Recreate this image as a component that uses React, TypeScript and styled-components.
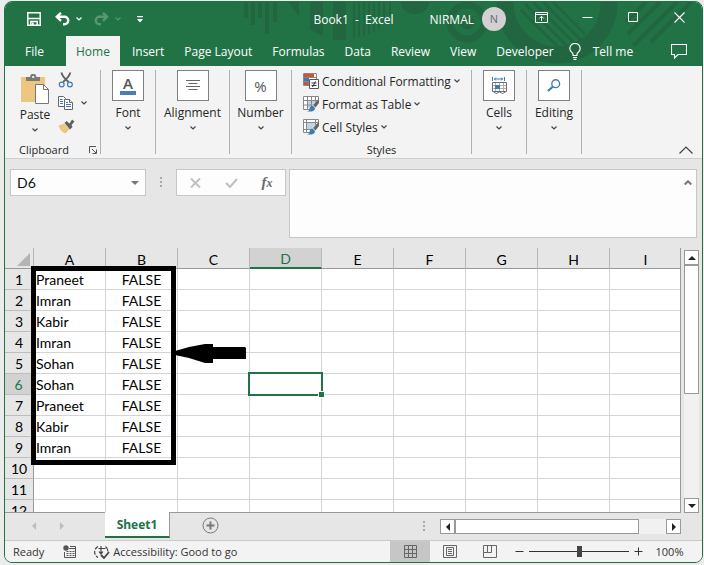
import React from 'react';
import styled, { createGlobalStyle, css } from 'styled-components';

const GREEN = '#217346';
const INK = '#262626';
const LINE = '#d4d4d4';
const UI_FONT = "'Open Sans', 'Noto Sans', sans-serif";
const CELL_FONT = "Lato, 'Open Sans', sans-serif";

const Global = createGlobalStyle`
  *, *::before, *::after { box-sizing: border-box; }
  body { margin: 0; background: #ececec; font-family: ${UI_FONT}; font-size: 12px; color: ${INK}; }
  button, input { font: inherit; color: inherit; }
  svg { display: block; flex: none; }
`;

const resetButton = css`
  padding: 0;
  border: 0;
  background: none;
  display: flex;
  align-items: center;
  justify-content: center;
`;

const Window = styled.div`
  margin: 0 1px 0 4px;
  border: 1px solid ${GREEN};
  border-radius: 8px;
  overflow: hidden;
  display: flex;
  flex-direction: column;
  flex: 1;
  min-height: 0;
  background: #e6e6e6;
`;

const Desktop = styled.div`
  height: 100vh;
  min-height: 400px;
  padding: 1px 0 2px;
  display: flex;
  flex-direction: column;
`;

/* ---------- Title bar and ribbon tabs ---------- */

const Banner = styled.header`
  position: relative;
  background: ${GREEN};
  color: #fff;
`;

const Decoration = styled.svg`
  position: absolute;
  top: 0;
  right: 0;
`;

const TitleBar = styled.div`
  position: relative;
  display: flex;
  align-items: center;
  height: 34px;
  padding-left: 22px;
`;

const QuickAccess = styled.div`
  display: flex;
  align-items: center;
`;

const QuickButton = styled.button<{ $after: number; $faded?: boolean }>`
  ${resetButton}
  margin-right: ${(p) => p.$after}px;
  opacity: ${(p) => (p.$faded ? 0.25 : 1)};
`;

const DocTitle = styled.h1`
  flex: 1;
  margin: 0 36px 0 0;
  font-size: 12px;
  font-weight: 400;
  text-align: right;
  white-space: pre;
`;

const UserName = styled.span`
  margin-right: 8px;
`;

const Avatar = styled.span`
  width: 24px;
  height: 24px;
  margin-right: 12px;
  border-radius: 50%;
  background: #d2d0d0;
  color: #6d6580;
  font-size: 11px;
  line-height: 24px;
  text-align: center;
`;

const WindowButton = styled.button`
  ${resetButton}
  width: 46px;
  height: 30px;
  align-self: flex-start;
`;

const TabRow = styled.nav`
  position: relative;
  display: flex;
  align-items: stretch;
  height: 30px;
  padding-left: 10px;
  padding-right: 15px;
`;

const Tab = styled.button<{ $active?: boolean; $gap?: number }>`
  ${resetButton}
  padding: 0 10px;
  margin-right: ${(p) => p.$gap ?? 0}px;
  background: ${(p) => (p.$active ? '#f3f3f3' : 'transparent')};
  color: ${(p) => (p.$active ? GREEN : '#fff')};
  white-space: nowrap;
`;

const TellMe = styled.button`
  ${resetButton}
  gap: 12px;
  margin-left: 5px;
`;

const CommentButton = styled.button`
  ${resetButton}
  margin-left: auto;
`;

/* ---------- Ribbon ---------- */

const Ribbon = styled.section`
  display: flex;
  align-items: flex-start;
  height: 93px;
  padding-top: 4px;
  background: #f3f3f3;
  border-bottom: 1px solid #cfcfcf;
`;

const Separator = styled.div`
  width: 1px;
  height: 84px;
  background: #b1b1b1;
`;

const Group = styled.div<{ $width: number }>`
  width: ${(p) => p.$width}px;
  height: 86px;
  display: flex;
  flex-direction: column;
`;

const GroupBody = styled.div`
  flex: 1;
  display: flex;
`;

const Caption = styled.div`
  display: flex;
  justify-content: center;
  align-items: center;
  height: 12px;
  font-size: 11px;
  line-height: 12px;
`;

const ClipboardCaption = styled(Caption)`
  justify-content: space-between;
  padding: 0 3px 0 14px;
`;

const PlainButton = styled.button`
  ${resetButton}
`;

const PasteButton = styled.button`
  ${resetButton}
  flex-direction: column;
  justify-content: flex-start;
  width: 44px;
  margin-left: 8px;
  padding-top: 4px;
`;

const ButtonLabel = styled.span`
  line-height: 16px;
  margin: 4px 0 5px;
  white-space: nowrap;
`;

const PasteLabel = styled(ButtonLabel)`
  margin: 3px 0 5px;
`;

const ClipTools = styled.div`
  display: flex;
  flex-direction: column;
  gap: 7px;
  padding: 2px 0 0 1px;
`;

const ClipTool = styled.button`
  ${resetButton}
  gap: 7px;
  justify-content: flex-start;
  height: 16px;
`;

const BigButton = styled.button`
  ${resetButton}
  flex: 1;
  flex-direction: column;
  justify-content: flex-start;
`;

const IconFrame = styled.span`
  width: 32px;
  height: 31px;
  border: 1px solid #808080;
  background: #fff;
  display: flex;
  flex-direction: column;
  align-items: center;
  justify-content: center;
  color: #555;
`;

const LetterA = styled.span`
  font-size: 15px;
  line-height: 15px;
  font-weight: 600;
  border-bottom: 4px solid #4a7ebb;
  width: 16px;
  height: 19px;
  text-align: center;
`;

const Percent = styled.span`
  font-size: 15px;
  line-height: 18px;
`;

const StyleList = styled.div`
  display: flex;
  flex-direction: column;
  padding: 0 0 0 11px;
  align-items: flex-start;
`;

const StyleButton = styled.button`
  ${resetButton}
  height: 22px;
  margin-bottom: 1px;
  gap: 3px;
  white-space: nowrap;
`;

const CollapseButton = styled.button`
  ${resetButton}
  margin: 76px 9px 0 auto;
`;

/* ---------- Formula bar ---------- */

const FormulaBar = styled.section`
  display: flex;
  align-items: flex-start;
  padding: 10px 5px;
`;

const Box = styled.div`
  display: flex;
  height: 27px;
  border: 1px solid #c6c6c6;
  background: #fdfdfd;
`;

const NameBox = styled(Box)`
  width: 136px;
  padding-right: 6px;
`;

const NameInput = styled.input`
  flex: 1;
  min-width: 0;
  border: 0;
  outline: 0;
  padding: 0 0 0 6px;
  background: none;
  font-family: ${CELL_FONT};
  font-size: 14px;
  color: #111;
`;

const Grip = styled.div<{ $width: number }>`
  width: ${(p) => p.$width}px;
  display: flex;
  flex-direction: column;
  align-items: center;
  gap: 2px;
  & > i { width: 2px; height: 2px; background: #a8a8a8; }
`;

const BarGrip = styled(Grip)`
  padding-top: 8px;
`;

const FxBox = styled(Box)`
  width: 110px;
`;

const FxButton = styled.button`
  ${resetButton}
  flex: 1;
`;

const FxMark = styled.span`
  font: italic 700 15px 'Liberation Serif', serif;
  color: #6a6a6a;
  & > small { font-size: 12px; }
`;

const FormulaBox = styled.div`
  flex: 1;
  height: 69px;
  margin-left: 3px;
  display: flex;
  align-items: flex-start;
  border: 1px solid #c6c6c6;
  background: #fdfdfd;
`;

const FormulaInput = styled.textarea`
  flex: 1;
  align-self: stretch;
  border: 0;
  outline: 0;
  resize: none;
  background: none;
  font: 14px ${CELL_FONT};
`;

const ExpandButton = styled.button`
  ${resetButton}
  margin: 10px 4px 0 0;
`;

/* ---------- Sheet ---------- */

const SheetArea = styled.main`
  flex: 1;
  min-height: 0;
  display: flex;
`;

const Pane = styled.div`
  position: relative;
  flex: 1;
  min-width: 0;
  overflow: hidden;
  border-right: 1px solid #999;
  border-bottom: 1px solid #999;
  background: #fff;
`;

const Grid = styled.table`
  width: calc(100% + 2px);
  table-layout: fixed;
  border-spacing: 0;
  font-family: ${CELL_FONT};
  font-size: 14px;
  line-height: 20px;
  color: #000;
`;

const Corner = styled.th`
  width: 29px;
  height: 21px;
  padding: 0;
  background: #e6e6e6;
  border-right: 1px solid #b8b8b8;
  border-bottom: 1px solid #999;
  & > svg { margin: 3px 0 0 12px; }
`;

const ColHead = styled.th<{ $on: boolean }>`
  height: 21px;
  padding: ${(p) => (p.$on ? '3px 0 0' : '2px 0 0')};
  line-height: ${(p) => (p.$on ? 16 : 17)}px;
  font-weight: 400;
  background: ${(p) => (p.$on ? '#d2d2d2' : '#e6e6e6')};
  color: ${(p) => (p.$on ? GREEN : '#000')};
  border-right: 1px solid #b8b8b8;
  border-bottom: ${(p) => (p.$on ? `2px solid ${GREEN}` : '1px solid #999')};
`;

const RowHead = styled.th<{ $on: boolean }>`
  height: 21px;
  padding: 1px 0 0;
  line-height: 19px;
  font-weight: 400;
  background: ${(p) => (p.$on ? '#d2d2d2' : '#e6e6e6')};
  color: ${(p) => (p.$on ? GREEN : '#000')};
  border-right: ${(p) => (p.$on ? `2px solid ${GREEN}` : '1px solid #999')};
  border-bottom: 1px solid #bdbdbd;
`;

const Cell = styled.td<{ $center?: boolean }>`
  position: relative;
  height: 21px;
  padding: ${(p) => (p.$center ? '1px 0 0' : '1px 0 0 2px')};
  line-height: 19px;
  text-align: ${(p) => (p.$center ? 'center' : 'left')};
  border-right: 1px solid ${LINE};
  border-bottom: 1px solid ${LINE};
`;

const Selection = styled.div`
  position: absolute;
  inset: -2px;
  z-index: 1;
  border: 2px solid ${GREEN};
  &::after {
    content: '';
    position: absolute;
    right: -4px;
    bottom: -4px;
    width: 7px;
    height: 7px;
    border: 1px solid #fff;
    background: ${GREEN};
  }
`;

const Highlight = styled.div`
  position: absolute;
  top: 18px;
  left: 26px;
  width: calc((100% - 27px) * 2 / 9 + 1px);
  height: 199px;
  border: 5px solid #000;
`;

const PointerArrow = styled.svg`
  position: absolute;
  top: 96px;
  left: calc((100% - 27px) * 2 / 9 + 26px);
`;

const VScroll = styled.div`
  width: 15px;
  margin: 2px 3px 0;
  display: flex;
  flex-direction: column;
  background: #f1f1f1;
`;

const ScrollButton = styled.button`
  ${resetButton}
  width: 15px;
  height: 15px;
  border: 1px solid #999;
  background: #fff;
`;

const VThumb = styled.div`
  height: 129px;
  margin-bottom: auto;
  border: 1px solid #999;
  background: #fff;
`;

/* ---------- Sheet tabs ---------- */

const SheetBar = styled.div`
  display: flex;
  align-items: flex-start;
  height: 27px;
  padding-right: 21px;
`;

const SheetNav = styled.div`
  width: 100px;
  height: 25px;
  display: flex;
  align-items: center;
  padding-left: 25px;
  gap: 20px;
`;

const SheetTab = styled.button`
  ${resetButton}
  position: relative;
  width: 65px;
  height: 26px;
  margin-top: -1px;
  background: #fff;
  border-right: 1px solid #999;
  border-bottom: 2px solid ${GREEN};
  color: ${GREEN};
  font-weight: 700;
`;

const AddSheet = styled.button`
  ${resetButton}
  margin: 4px 0 0 32px;
`;

const SheetGrip = styled(Grip)`
  margin-left: auto;
  padding-top: 8px;
`;

const HScroll = styled.div`
  width: 241px;
  height: 15px;
  margin-top: 6px;
  display: flex;
  background: #f1f1f1;
`;

const HThumb = styled.div`
  width: 184px;
  margin-right: auto;
  border: 1px solid #999;
  background: #fff;
`;

/* ---------- Status bar ---------- */

const StatusBar = styled.footer`
  display: flex;
  align-items: center;
  height: 22px;
  padding: 0 18px 0 8px;
  background: #f3f3f3;
  border-top: 1px solid #c9c9c9;
  font-size: 11px;
  color: #333;
`;

const StatusItem = styled.button<{ $left: number }>`
  ${resetButton}
  gap: 3px;
  margin-left: ${(p) => p.$left}px;
  white-space: nowrap;
`;

const ViewButtons = styled.div`
  display: flex;
  align-self: stretch;
  margin-left: auto;
`;

const ViewButton = styled.button<{ $on?: boolean }>`
  ${resetButton}
  width: 40px;
  background: ${(p) => (p.$on ? '#c6c6c6' : 'transparent')};
`;

const ZoomGroup = styled.div`
  display: flex;
  align-items: center;
  gap: 5px;
  margin-left: 5px;
`;

const ZoomRange = styled.input`
  appearance: none;
  width: 100px;
  height: 12px;
  margin: 0;
  background: none;
  &::-webkit-slider-runnable-track {
    height: 1px;
    background: #333;
  }
  &::-webkit-slider-thumb {
    appearance: none;
    width: 5px;
    height: 11px;
    margin-top: -5px;
    background: #444;
  }
`;

const ZoomValue = styled.button`
  ${resetButton}
  margin-left: 7px;
  width: 29px;
`;

/* ---------- Icons ---------- */

const Chevron = ({ color = '#444' }: { color?: string }) => (
  <svg width="6" height="4" viewBox="0 0 6 4" fill="none" stroke={color} strokeWidth="1.2">
    <path d="M.5 .5 3 3 5.5 .5" />
  </svg>
);

type Dir = 'up' | 'down' | 'left' | 'right';
const PATHS: Record<Dir, string> = {
  up: 'M0 6 4 2l4 4z',
  down: 'M0 2h8L4 6z',
  left: 'M6 0v8L2 4z',
  right: 'M2 0v8l4-4z',
};
const Triangle = ({ dir, color = '#222' }: { dir: Dir; color?: string }) => (
  <svg width="8" height="8" viewBox="0 0 8 8" fill={color}>
    <path d={PATHS[dir]} />
  </svg>
);

const BannerArt = () => (
  <Decoration width="469" height="64" viewBox="-2 2 469 64" fill="#216641">
    <path d="M9 2h4v16H9zM16 2h4v23h-4zM23 2h4v16h-4zM30 2h4v32h-4zM38 2h4v20h-4z" />
    <path d="M54 2h10v14q-5-5-10-14zM75 2h13v34q-8-3-13-7zM98 2h13v38H98z" />
    <path d="M118 2h2v36h-2zM123 2h2v35h-2zM128 2h2v34h-2zM133 2h2v32h-2zM138 2h2v30h-2zM143 2h2v27h-2zM148 2h2v22h-2zM154 2h2v14h-2z" />
    <path d="M166 2h28a14 12 0 0 1-28 0z" />
    <g fill="none" stroke="#216641">
      <circle cx="232" cy="22" r="17" strokeWidth="7" />
      <circle cx="232" cy="22" r="5" strokeWidth="5" />
      <circle cx="322" cy="3" r="52" strokeWidth="17" />
      <path strokeWidth="3" d="M286 10l42 42M290 4l46 46M298 2l44 44M308 2l38 38M318 2l32 32" />
      <path strokeWidth="4" d="M391 22l20-20M393 34l32-32M398 46l44-44M416 42l40-40" />
    </g>
  </Decoration>
);

const SaveIcon = () => (
  <svg width="14" height="14" viewBox="0 0 14 14" fill="none" stroke="#fff" strokeWidth="1.5">
    <path d="M.8.8h12.4v12.4H.8z" />
    <path d="M1 6.500h12" />
    <path d="M3.800 13V9.500h6.400V13" />
    <path d="M5.800 10.500v2.500" strokeWidth="1.800" />
  </svg>
);

const UndoIcon = ({ flip }: { flip?: boolean }) => (
  <svg width="15" height="14" viewBox="0 0 15 14" fill="none" stroke="#fff" strokeWidth="2.4">
    <g transform={flip ? 'matrix(-1 0 0 1 15 0)' : undefined}>
      <path d="M6 .8 1.8 4.800 6 8.800" />
      <path d="M2 4.800H9.500a3.600 3.600 0 0 1 0 7.400H8" />
    </g>
  </svg>
);

const CustomizeIcon = () => (
  <svg width="6" height="7" viewBox="0 0 6 7" fill="#fff">
    <path d="M0 0h6v1.2H0zM0 3h6L3 6.5z" />
  </svg>
);

const RibbonModeIcon = () => (
  <svg width="13" height="11" viewBox="0 0 13 11" fill="none" stroke="#fff">
    <path d="M.5.5h12v10H.5zM.5 2.5h12M6.5 9V4.5M4.3 6.5l2.2-2.2 2.2 2.2" />
  </svg>
);

const MinIcon = () => (
  <svg width="11" height="11" viewBox="0 0 11 11" stroke="#fff">
    <path d="M.5 5.5h10" />
  </svg>
);

const MaxIcon = () => (
  <svg width="10" height="10" viewBox="0 0 10 10" fill="none" stroke="#fff">
    <path d="M.5.5h9v9h-9z" />
  </svg>
);

const CloseIcon = () => (
  <svg width="11" height="11" viewBox="0 0 11 11" stroke="#fff" strokeWidth="1.1">
    <path d="M.5.5l10 10M10.5.5l-10 10" />
  </svg>
);

const BulbIcon = () => (
  <svg width="12" height="17" viewBox="0 0 12 17" fill="none" stroke="#fff" strokeWidth="1.2">
    <path d="M4 12.500V11C3.800 9.500.8 8.800.8 5.600a5.200 5.200 0 0 1 10.400 0C11.200 8.800 8.200 9.500 8 11v1.500zM4 14.500h4M4.500 16.300h3" />
  </svg>
);

const CommentIcon = () => (
  <svg width="16" height="15" viewBox="0 0 16 15" fill="none" stroke="#fff" strokeWidth="1.1">
    <path d="M.5.5h15v10H7l-3.500 3.500V10.500h-3z" />
  </svg>
);

const PasteIcon = () => (
  <svg width="29" height="30" viewBox="0 0 29 30">
    <path fill="#edc67f" d="M0 3h24v25H0z" />
    <path fill="#7a7a7a" d="M5 7V3h4a3.200 3.200 0 0 1 6.400 0H19v4z" />
    <path fill="#f3f3f3" d="M11.200 2h2v2h-2z" />
    <path fill="#fff" stroke="#777" d="M14.500 10.500h8l5 5v14h-13z" />
    <path fill="none" stroke="#777" d="M22.500 10.500v5h5" />
  </svg>
);

const CutIcon = () => (
  <svg width="16" height="16" viewBox="0 0 16 16" fill="none">
    <path stroke="#606060" strokeWidth="2" d="M3.500 .5c.5 4 3.500 6 7 9.500M12.200.5c-.5 4-3.500 6-7 9.500" />
    <g stroke="#3f7ab8" strokeWidth="1.200">
      <circle cx="3.700" cy="12.500" r="2.400" />
      <circle cx="11.900" cy="12.500" r="2.400" />
    </g>
  </svg>
);

const CopyIcon = () => (
  <svg width="16" height="15" viewBox="0 0 16 15" fill="#fff" stroke="#666">
    <path d="M.5.500h5l2 2v8h-7z" />
    <path d="M6.500 3.500h5l3 3v7h-8z" />
    <path d="M11.500 3.500v3h3" />
    <path stroke="#3f7ab8" d="M2 3.500h2.500M2 5.500h3M2 7.500h3M8 6.500h2M8 8.500h5M8 10.500h5" />
  </svg>
);

const PainterIcon = () => (
  <svg width="17" height="15" viewBox="0 0 17 15">
    <path fill="#edc67f" d="M.5 6.500 6 4.500l5.500 5.500-4 4.500c-3-1-6-4-7-8z" />
    <path fill="#606060" d="M6.500 4 8.500 2l3 2.500L14 .5l2.500 2-3 3.500 1 2-2.500 2.500z" />
  </svg>
);

const AlignIcon = () => (
  <svg width="14" height="11" viewBox="0 0 14 11" stroke="#666">
    <path d="M0 .5h14M2.500 3.500h9M0 6.500h14M2.500 9.500h9" />
  </svg>
);

const CellsIcon = () => (
  <svg width="15" height="17" viewBox="0 0 15 17" fill="none">
    <path stroke="#3f7ab8" d="M.5 0v4M12.500 0v4M2 2h9M4 .500 2.500 2 4 3.500M9 .500 10.500 2 9 3.500" />
    <path stroke="#b0b0b0" d="M0 8.500h15M0 11.500h15M3.500 5.500v9M7.500 5.500v9M11.500 5.500v9" />
    <path stroke="#707070" d="M.5 5.500h14v9H.5zM1.500 15l3 1.500 3-1.500 3 1.500 3-1.500" />
    <path fill="#3f7ab8" d="M3 8h5v4H3z" />
  </svg>
);

const FindIcon = () => (
  <svg width="14" height="13" viewBox="0 0 14 13" fill="none" stroke="#3f7ab8">
    <circle cx="8.700" cy="4.700" r="3.900" strokeWidth="1.400" />
    <path strokeWidth="2.200" d="M6 7.500 1 12" />
  </svg>
);

const CondIcon = () => (
  <svg width="16" height="16" viewBox="0 0 16 16">
    <path fill="#fff" d="M0 0h14v13H0z" />
    <path fill="none" stroke="#888" d="M.5.500h13v12H.5zM.5 4.500h13M.5 8.500h6M5.500.5v12M9.500.5v4" />
    <path fill="#d35230" d="M1 1h10v3H1zM1 9h4v3H1z" />
    <path fill="#3f7ab8" d="M1 5h5v3H1z" />
    <path fill="#fff" stroke="#555" d="M6.500 6.500h9v9h-9z" />
    <path stroke="#333" fill="none" d="M8.500 10h5M8.500 12.500h5M12.500 8.500l-3 5.500" />
  </svg>
);

const TableStyleIcon = ({ grid }: { grid?: boolean }) => (
  <svg width="16" height="16" viewBox="0 0 16 16">
    <path fill="#fff" d="M0 0h15v13H0z" />
    <path fill="#bfd3e8" d={grid ? 'M4 4h10v8H4z' : 'M3 4h9v7H3z'} />
    <path
      fill="none"
      stroke="#888"
      d={grid ? 'M.5.500h15v13H.5zM.5 4.500h15M.5 9h15M4.500.5v13M8.500.5v13M12.500.5v13' : 'M.5.500h15v13H.5zM.5 3.500h15M.5 10.500h12M3.500.5v13M12.500.5v13'}
    />
    <path fill="#f3f3f3" d="M9 16 6 14l4-6 6-5v13z" />
    <path fill="#666" d="M16 2.500 10 9l2.500 2.500L16 7z" />
    <path fill="#3f7ab8" d="M9.500 9.500 12 12c0 3-3 4-8 3.500 2-.5 2-1.500 2.500-3 .5-1.500 1.500-3 3-3z" />
  </svg>
);

const MacroIcon = () => (
  <svg width="13" height="13" viewBox="0 0 13 13" fill="none" stroke="#555">
    <circle cx="3" cy="3" r="2.700" fill="#555" stroke="none" />
    <path d="M7 1.500h5.500v11h-11V7M6 3.500h6.500M3.500 6.500h2M6.500 6.500h2M9.500 6.500h2M3.500 8.500h2M6.500 8.500h2M9.500 8.500h2M3.500 10.500h2M6.500 10.500h2M9.500 10.500h2" />
  </svg>
);

const AccessIcon = () => (
  <svg width="16" height="14" viewBox="0 0 16 14" fill="none" stroke="#444" strokeWidth="1.200">
    <path d="M4 1.500C-.5 4-.5 10 4 12.500" strokeDasharray="4 1.500" />
    <path d="M7 1v8M4.500 3.500h7M5 6.500 7 9l2-2.500M11.500 1.500c2 1.500 2.500 3 2.500 5" />
    <path strokeWidth="1.800" d="M7 10l3 3 5-6" />
  </svg>
);

const NormalViewIcon = () => (
  <svg width="13" height="13" viewBox="0 0 13 13" fill="none" stroke="#666">
    <path d="M.5.500h12v12H.5zM.5 4.500h12M.5 8.500h12M4.500.5v12M8.500.5v12" />
  </svg>
);

const PageViewIcon = () => (
  <svg width="14" height="13" viewBox="0 0 14 13" fill="none" stroke="#666">
    <path d="M.5.500h13v12H.5zM3.500 2.500h7v8h-7zM5 4.500h4M5 6.500h4M5 8.500h4" />
  </svg>
);

const BreakViewIcon = () => (
  <svg width="14" height="13" viewBox="0 0 14 13" fill="none" stroke="#666">
    <path d="M.5.500h13v12H.5zM.5 7.500h8M4.500.5v7M8.500.5v7" />
  </svg>
);

const PlusMinus = ({ plus }: { plus?: boolean }) => (
  <svg width="9" height="9" viewBox="0 0 9 9" stroke="#333">
    <path d={plus ? 'M.5 4.500h8M4.500.5v8' : 'M.5 4.500h8'} />
  </svg>
);

/* ---------- Page ---------- */

const TABS = ['Insert', 'Page Layout', 'Formulas', 'Data', 'Review', 'View', 'Developer'];
const COLUMNS = ['A', 'B', 'C', 'D', 'E', 'F', 'G', 'H', 'I'];
const NAMES = ['Praneet', 'Imran', 'Kabir', 'Imran', 'Sohan', 'Sohan', 'Praneet', 'Kabir', 'Imran'];
const ROWS = Array.from({ length: 12 }, (_, i) => i + 1);
const ACTIVE_COL = 'D';
const ACTIVE_ROW = 6;

const cellText = (col: string, row: number) => {
  const name = NAMES[row - 1];
  if (!name) return '';
  return col === 'A' ? name : col === 'B' ? 'FALSE' : '';
};

const CollapsedGroup = ({ label, width, children }: { label: string; width: number; children: React.ReactNode }) => (
  <>
    <Group $width={width}>
      <BigButton>
        <IconFrame>{children}</IconFrame>
        <ButtonLabel>{label}</ButtonLabel>
        <Chevron />
      </BigButton>
    </Group>
    <Separator />
  </>
);

export default function App() {
  return (
    <Desktop>
      <Global />
      <Window>
        <Banner>
          <BannerArt />
          <TitleBar>
            <QuickAccess>
              <QuickButton $after={14} aria-label="Save"><SaveIcon /></QuickButton>
              <QuickButton $after={6} aria-label="Undo"><UndoIcon /></QuickButton>
              <QuickButton $after={12} aria-label="Undo history"><Chevron color="#fff" /></QuickButton>
              <QuickButton $after={6} $faded aria-label="Redo"><UndoIcon flip /></QuickButton>
              <QuickButton $after={16} $faded aria-label="Redo history"><Chevron color="#fff" /></QuickButton>
              <QuickButton $after={0} aria-label="Customize toolbar"><CustomizeIcon /></QuickButton>
            </QuickAccess>
            <DocTitle>{'Book1  -  Excel'}</DocTitle>
            <UserName>NIRMAL</UserName>
            <Avatar>N</Avatar>
            <WindowButton aria-label="Ribbon display options"><RibbonModeIcon /></WindowButton>
            <WindowButton aria-label="Minimize"><MinIcon /></WindowButton>
            <WindowButton aria-label="Maximize"><MaxIcon /></WindowButton>
            <WindowButton aria-label="Close"><CloseIcon /></WindowButton>
          </TitleBar>
          <TabRow>
            <Tab $gap={12}>File</Tab>
            <Tab $active $gap={2}>Home</Tab>
            {TABS.map((t) => <Tab key={t}>{t}</Tab>)}
            <TellMe><BulbIcon />Tell me</TellMe>
            <CommentButton aria-label="Comments"><CommentIcon /></CommentButton>
          </TabRow>
        </Banner>

        <Ribbon>
          <Group $width={95}>
            <GroupBody>
              <PasteButton>
                <PasteIcon />
                <PasteLabel>Paste</PasteLabel>
                <Chevron />
              </PasteButton>
              <ClipTools>
                <ClipTool aria-label="Cut"><CutIcon /></ClipTool>
                <ClipTool aria-label="Copy"><CopyIcon /><Chevron /></ClipTool>
                <ClipTool aria-label="Format painter"><PainterIcon /></ClipTool>
              </ClipTools>
            </GroupBody>
            <ClipboardCaption>
              Clipboard
              <PlainButton aria-label="Clipboard options">
                <svg width="8" height="8" viewBox="0 0 8 8" fill="none" stroke="#555">
                  <path d="M.5 7V.500H7M3 3l4 4M7.500 3.500v4h-4" />
                </svg>
              </PlainButton>
            </ClipboardCaption>
          </Group>
          <Separator />
          <CollapsedGroup label="Font" width={54}><LetterA>A</LetterA></CollapsedGroup>
          <CollapsedGroup label="Alignment" width={73}><AlignIcon /></CollapsedGroup>
          <CollapsedGroup label="Number" width={61}><Percent>%</Percent></CollapsedGroup>
          <Group $width={179}>
            <GroupBody>
              <StyleList>
                <StyleButton><CondIcon />Conditional Formatting<Chevron /></StyleButton>
                <StyleButton><TableStyleIcon grid />Format as Table<Chevron /></StyleButton>
                <StyleButton><TableStyleIcon />Cell Styles<Chevron /></StyleButton>
              </StyleList>
            </GroupBody>
            <Caption>Styles</Caption>
          </Group>
          <Separator />
          <CollapsedGroup label="Cells" width={54}><CellsIcon /></CollapsedGroup>
          <CollapsedGroup label="Editing" width={54}><FindIcon /></CollapsedGroup>
          <CollapseButton aria-label="Collapse the ribbon">
            <svg width="14" height="8" viewBox="0 0 14 8" fill="none" stroke="#444" strokeWidth="1.200">
              <path d="M.5 7.500 7 1l6.500 6.500" />
            </svg>
          </CollapseButton>
        </Ribbon>

        <FormulaBar>
          <NameBox>
            <NameInput aria-label="Name box" defaultValue="D6" />
            <PlainButton aria-label="Named ranges"><Triangle dir="down" color="#777" /></PlainButton>
          </NameBox>
          <BarGrip $width={30}><i /><i /><i /></BarGrip>
          <FxBox>
            <FxButton aria-label="Cancel">
              <svg width="11" height="10" viewBox="0 0 11 10" stroke="#c0c0c0" strokeWidth="2">
                <path d="M1 .5l9 9M10 .5l-9 9" />
              </svg>
            </FxButton>
            <FxButton aria-label="Enter">
              <svg width="13" height="10" viewBox="0 0 13 10" fill="none" stroke="#c0c0c0" strokeWidth="2">
                <path d="M1 5l4 4 7-8" />
              </svg>
            </FxButton>
            <FxButton aria-label="Insert function"><FxMark>f<small>x</small></FxMark></FxButton>
          </FxBox>
          <FormulaBox>
            <FormulaInput aria-label="Formula" />
            <ExpandButton aria-label="Collapse formula bar">
              <svg width="8" height="5" viewBox="0 0 8 5" fill="none" stroke="#777" strokeWidth="2">
                <path d="M.7 4.500 4 1.200l3.300 3.300" />
              </svg>
            </ExpandButton>
          </FormulaBox>
        </FormulaBar>

        <SheetArea>
          <Pane>
            <Grid>
              <thead>
                <tr>
                  <Corner aria-label="Select all">
                    <svg width="13" height="13" viewBox="0 0 13 13" fill="#b4b4b4"><path d="M13 0v13H0z" /></svg>
                  </Corner>
                  {COLUMNS.map((c) => <ColHead key={c} scope="col" $on={c === ACTIVE_COL}>{c}</ColHead>)}
                </tr>
              </thead>
              <tbody>
                {ROWS.map((r) => (
                  <tr key={r}>
                    <RowHead scope="row" $on={r === ACTIVE_ROW}>{r}</RowHead>
                    {COLUMNS.map((c) => (
                      <Cell key={c} $center={c === 'B'}>
                        {cellText(c, r)}
                        {c === ACTIVE_COL && r === ACTIVE_ROW && <Selection />}
                      </Cell>
                    ))}
                  </tr>
                ))}
              </tbody>
            </Grid>
            <Highlight />
            <PointerArrow width="71" height="19" viewBox="0 0 71 19">
              <path d="M0 7l14-4L30 0h8v3h32l1 1v11H38v4h-8l-16-5L0 11z" />
            </PointerArrow>
          </Pane>
          <VScroll>
            <ScrollButton aria-label="Scroll up"><Triangle dir="up" /></ScrollButton>
            <VThumb />
            <ScrollButton aria-label="Scroll down"><Triangle dir="down" /></ScrollButton>
          </VScroll>
        </SheetArea>

        <SheetBar>
          <SheetNav>
            <PlainButton aria-label="Previous sheet"><Triangle dir="left" color="#bdbdbd" /></PlainButton>
            <PlainButton aria-label="Next sheet"><Triangle dir="right" color="#bdbdbd" /></PlainButton>
          </SheetNav>
          <SheetTab>Sheet1</SheetTab>
          <AddSheet aria-label="New sheet">
            <svg width="17" height="17" viewBox="0 0 17 17" fill="none" stroke="#777">
              <circle cx="8.500" cy="8.500" r="7.500" />
              <path strokeWidth="2" d="M8.500 4.500v8M4.500 8.500h8" />
            </svg>
          </AddSheet>
          <SheetGrip $width={32}><i /><i /><i /></SheetGrip>
          <HScroll>
            <ScrollButton aria-label="Scroll left"><Triangle dir="left" /></ScrollButton>
            <HThumb />
            <ScrollButton aria-label="Scroll right"><Triangle dir="right" /></ScrollButton>
          </HScroll>
        </SheetBar>

        <StatusBar>
          <span>Ready</span>
          <StatusItem $left={19} aria-label="Record macro"><MacroIcon /></StatusItem>
          <StatusItem $left={18}><AccessIcon />Accessibility: Good to go</StatusItem>
          <ViewButtons>
            <ViewButton $on aria-label="Normal view"><NormalViewIcon /></ViewButton>
            <ViewButton aria-label="Page layout view"><PageViewIcon /></ViewButton>
            <ViewButton aria-label="Page break preview"><BreakViewIcon /></ViewButton>
          </ViewButtons>
          <ZoomGroup>
            <PlainButton aria-label="Zoom out"><PlusMinus /></PlainButton>
            <ZoomRange type="range" aria-label="Zoom" min={0} max={100} defaultValue={50} />
            <PlainButton aria-label="Zoom in"><PlusMinus plus /></PlainButton>
            <ZoomValue>100%</ZoomValue>
          </ZoomGroup>
        </StatusBar>
      </Window>
    </Desktop>
  );
}
